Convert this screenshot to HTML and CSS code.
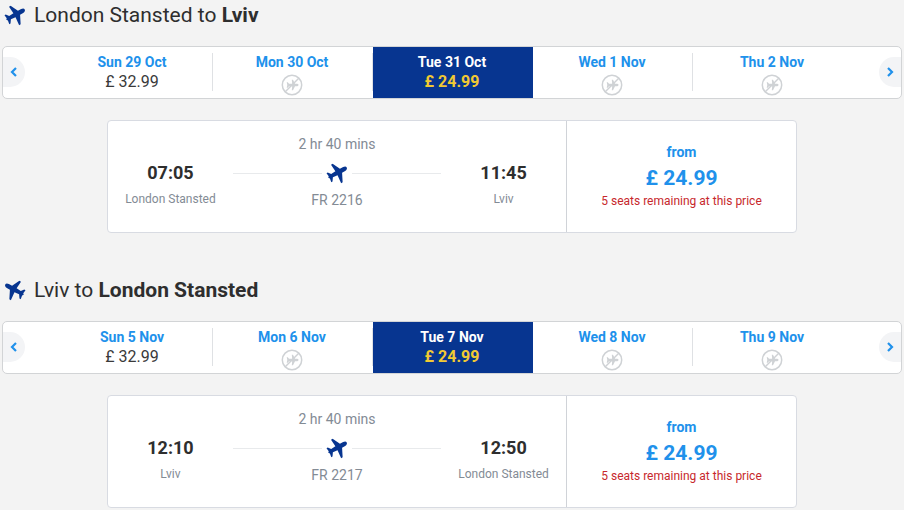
FILE: index.html
```html
<!DOCTYPE html>
<html lang="en">
<head>
    <meta charset="UTF-8">
    <meta name="viewport" content="width=device-width, initial-scale=1.0">
    <title>Select flights</title>
    <link rel="stylesheet" href="styles.css">
</head>
<body>
    <svg class="symbols" aria-hidden="true">
        <symbol id="plane" viewBox="0 0 22 22">
            <path transform="translate(11.5 11.5) rotate(-28)" d="M11 -1 C11 0.3 9.8 1.1 8 1.3 L4.4 1.5 L0.4 10.2 L-1.4 10.4 L-0.8 1.6 L-5.8 1.1 L-8.2 4.8 L-9.6 4.8 L-9 0.8 L-10.2 -0.5 L-9 -1.8 L-9.6 -5.4 L-8.2 -5.4 L-5.8 -2.5 L-0.8 -3 L-1.6 -10.8 L0.2 -10.8 L4.4 -3.1 L8 -3.1 C9.8 -3 11 -2.3 11 -1 Z"/>
        </symbol>
        <symbol id="no-flight" viewBox="0 0 22 22">
            <circle cx="11" cy="11" r="9.7" fill="none" stroke="currentColor" stroke-width="1.5"/>
            <path d="M18 4 L4 18" stroke="currentColor" stroke-width="1.5"/>
            <path fill="currentColor" d="M17.5 11 C17.5 12 16.5 12.2 15.5 12.2 H14 L12 16.2 H10.8 L11.2 12.2 H8 L6.8 13.8 H5.7 L6.3 11 L5.7 8.2 H6.8 L8 9.8 H11.2 L10.8 5.8 H12 L14 9.8 H15.5 C16.5 9.8 17.5 10 17.5 11 Z"/>
        </symbol>
        <symbol id="chevron" viewBox="0 0 10 10">
            <path d="M3 1 L7 5 L3 9" fill="none" stroke="currentColor" stroke-width="2.2"/>
        </symbol>
    </svg>

    <section class="trip">
        <h2 class="trip-title"><svg class="plane"><use href="#plane"/></svg><span>London Stansted to <b>Lviv</b></span></h2>
        <div class="carousel">
            <button class="arrow arrow-prev" aria-label="Previous days"><svg><use href="#chevron"/></svg></button>
            <button class="day"><span class="date">Sun 29 Oct</span><span class="fare">£ 32.99</span></button>
            <button class="day"><span class="date">Mon 30 Oct</span><svg class="no-flight"><use href="#no-flight"/></svg></button>
            <button class="day active"><span class="date">Tue 31 Oct</span><span class="fare">£ 24.99</span></button>
            <button class="day"><span class="date">Wed 1 Nov</span><svg class="no-flight"><use href="#no-flight"/></svg></button>
            <button class="day"><span class="date">Thu 2 Nov</span><svg class="no-flight"><use href="#no-flight"/></svg></button>
            <button class="arrow arrow-next" aria-label="Next days"><svg><use href="#chevron"/></svg></button>
        </div>
        <div class="flight">
            <div class="route">
                <div class="stop"><span class="time">07:05</span><span class="city">London Stansted</span></div>
                <div class="leg">
                    <span class="duration">2 hr 40 mins</span>
                    <div class="line"><svg class="plane"><use href="#plane"/></svg></div>
                    <span class="number">FR 2216</span>
                </div>
                <div class="stop"><span class="time">11:45</span><span class="city">Lviv</span></div>
            </div>
            <div class="price">
                <span class="from">from</span>
                <span class="amount">£ 24.99</span>
                <span class="seats">5 seats remaining at this price</span>
            </div>
        </div>
    </section>

    <section class="trip">
        <h2 class="trip-title"><svg class="plane plane-back"><use href="#plane"/></svg><span>Lviv to <b>London Stansted</b></span></h2>
        <div class="carousel">
            <button class="arrow arrow-prev" aria-label="Previous days"><svg><use href="#chevron"/></svg></button>
            <button class="day"><span class="date">Sun 5 Nov</span><span class="fare">£ 32.99</span></button>
            <button class="day"><span class="date">Mon 6 Nov</span><svg class="no-flight"><use href="#no-flight"/></svg></button>
            <button class="day active"><span class="date">Tue 7 Nov</span><span class="fare">£ 24.99</span></button>
            <button class="day"><span class="date">Wed 8 Nov</span><svg class="no-flight"><use href="#no-flight"/></svg></button>
            <button class="day"><span class="date">Thu 9 Nov</span><svg class="no-flight"><use href="#no-flight"/></svg></button>
            <button class="arrow arrow-next" aria-label="Next days"><svg><use href="#chevron"/></svg></button>
        </div>
        <div class="flight">
            <div class="route">
                <div class="stop"><span class="time">12:10</span><span class="city">Lviv</span></div>
                <div class="leg">
                    <span class="duration">2 hr 40 mins</span>
                    <div class="line"><svg class="plane"><use href="#plane"/></svg></div>
                    <span class="number">FR 2217</span>
                </div>
                <div class="stop"><span class="time">12:50</span><span class="city">London Stansted</span></div>
            </div>
            <div class="price">
                <span class="from">from</span>
                <span class="amount">£ 24.99</span>
                <span class="seats">5 seats remaining at this price</span>
            </div>
        </div>
    </section>
</body>
</html>
```
FILE: styles.css
```css
* {
    box-sizing: border-box;
}
body {
    margin: 0;
    background-color: #f3f3f3;
    color: #2e2e2e;
    font-family: Roboto, Arial, sans-serif;
}
button {
    margin: 0;
    padding: 0;
    border: 0;
    background: none;
    font-family: inherit;
    cursor: pointer;
}
.symbols {
    display: block;
    width: 0;
    height: 0;
}
.plane {
    width: 22px;
    height: 22px;
    flex: none;
    fill: #073590;
    overflow: visible;
}
.plane-back {
    transform: scaleX(-1);
}
.trip {
    padding: 0 2px;
    margin-bottom: 42px;
}
.trip:last-child {
    margin-bottom: 0;
}
.trip-title {
    display: flex;
    align-items: center;
    gap: 8px;
    height: 30px;
    margin: 0 0 16px;
    padding-left: 2px;
    font-size: 21px;
    font-weight: 400;
}
.trip-title b {
    font-weight: 700;
}

/* Days */
.carousel {
    display: flex;
    justify-content: space-between;
    height: 53px;
    border: 1px solid #d2d4d6;
    border-radius: 5px;
    background-color: #fff;
}
.arrow {
    flex: none;
    width: 22px;
    height: 30px;
    margin: 10px 28px 0 0;
    border-radius: 0 15px 15px 0;
    background-color: #f3f4f6;
    color: #2091eb;
}
.arrow svg {
    display: block;
    width: 10px;
    height: 10px;
    margin: 0 auto;
}
.arrow-prev svg {
    transform: scaleX(-1);
}
.arrow-next {
    margin: 10px 0 0 26px;
    border-radius: 15px 0 0 15px;
}
.day {
    position: relative;
    flex: 1;
    display: flex;
    flex-direction: column;
    align-items: center;
    padding: 6px 2px 0 0;
}
.day + .day::before {
    content: "";
    position: absolute;
    left: -1px;
    top: 6px;
    width: 1px;
    height: 38px;
    background-color: #dfe1e4;
}
.date {
    color: #2091eb;
    font-size: 14px;
    font-weight: 700;
    line-height: 18px;
}
.fare {
    color: #3a3a3a;
    font-size: 16px;
    line-height: 22px;
}
.no-flight {
    width: 22px;
    height: 22px;
    margin-top: 3px;
    color: #cfd2d5;
}
.active {
    background-color: #073590;
}
.active .date {
    color: #fff;
}
.active .fare {
    color: #f1c933;
    font-weight: 700;
}
.active + .day::before {
    display: none;
}

/* Flight card */
.flight {
    display: flex;
    max-width: 690px;
    height: 113px;
    margin: 21px auto 0;
    border: 1px solid #d8dbe2;
    border-radius: 4px;
    background-color: #fff;
}
.route {
    flex: 2;
    display: flex;
    border-right: 1px solid #d0d3d8;
}
.stop {
    flex: 3;
    display: flex;
    flex-direction: column;
    align-items: center;
    padding-top: 40px;
}
.time {
    font-size: 18px;
    font-weight: 700;
    line-height: 24px;
}
.city {
    margin-top: 4px;
    color: #838b95;
    font-size: 12px;
    line-height: 20px;
}
.leg {
    flex: 5;
    display: flex;
    flex-direction: column;
    align-items: center;
    padding-top: 14px;
    color: #838b95;
    font-size: 14px;
    line-height: 18px;
}
.line {
    display: flex;
    align-items: center;
    gap: 4px;
    width: 100%;
    height: 22px;
    margin: 9px 0 7px;
}
.line::before,
.line::after {
    content: "";
    flex: 1;
    height: 1px;
    background-color: #e8eaec;
}
.price {
    flex: 1;
    display: flex;
    flex-direction: column;
    align-items: center;
    padding-top: 22px;
    color: #2091eb;
    font-weight: 700;
}
.from {
    font-size: 14px;
    line-height: 18px;
}
.amount {
    font-size: 21px;
    line-height: 34px;
}
.seats {
    color: #c7282c;
    font-size: 12px;
    font-weight: 400;
    line-height: 12px;
}
```
